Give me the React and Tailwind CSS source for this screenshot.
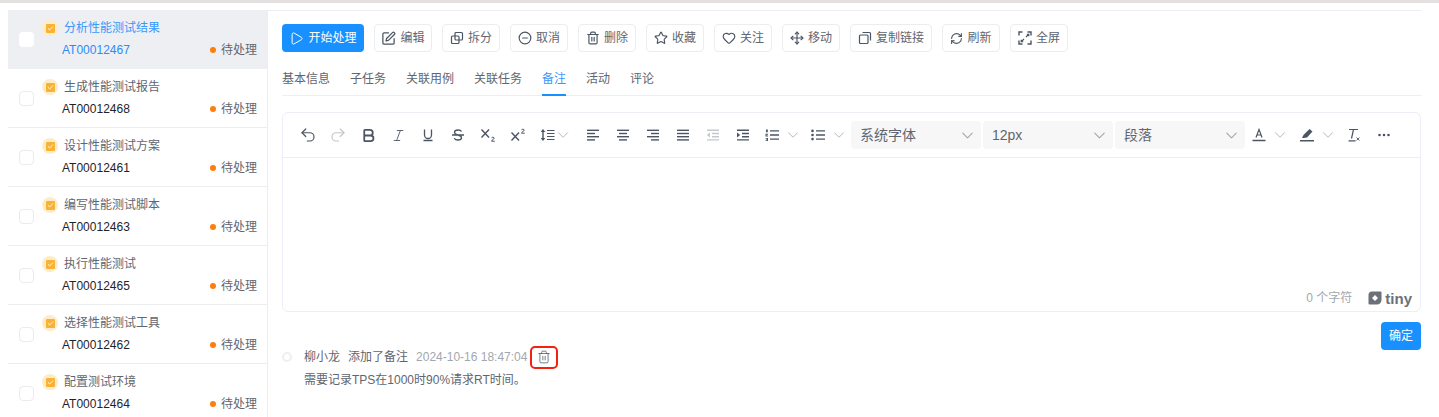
import { Play, SquarePen, CircleMinus, Trash2, Star, Heart, Move, RefreshCw, ChevronDown, Undo2, Redo2, Bold, Italic, Check } from 'lucide-react';

const font = "font-['Liberation_Sans','Noto_Sans_CJK_SC',sans-serif]";

const tasks = [
  { title: '分析性能测试结果', id: 'AT00012467', active: true },
  { title: '生成性能测试报告', id: 'AT00012468' },
  { title: '设计性能测试方案', id: 'AT00012461' },
  { title: '编写性能测试脚本', id: 'AT00012463' },
  { title: '执行性能测试', id: 'AT00012465' },
  { title: '选择性能测试工具', id: 'AT00012462' },
  { title: '配置测试环境', id: 'AT00012464' },
];

const tabs = ['基本信息', '子任务', '关联用例', '关联任务', '备注', '活动', '评论'];

function SplitIcon() {
  return (
    <svg width="14" height="14" viewBox="0 0 14 14" fill="none" stroke="currentColor" strokeWidth="1.2">
      <rect x="5" y="1.5" width="7.5" height="7.5" rx="1" />
      <rect x="1.5" y="5" width="7.5" height="7.5" rx="1" />
    </svg>
  );
}

function LinkCopyIcon() {
  return (
    <svg width="14" height="14" viewBox="0 0 14 14" fill="none" stroke="currentColor" strokeWidth="1.2">
      <rect x="1.5" y="4" width="8.5" height="8.5" rx="1" />
      <path d="M4.5 1.5h7a1 1 0 0 1 1 1v7" />
    </svg>
  );
}

function FullIcon() {
  return (
    <svg width="14" height="14" viewBox="0 0 14 14" fill="none" stroke="currentColor" strokeWidth="1.4">
      <path d="M4.500 1h-3.500v3.500M9.500 1h3.500v3.500M4.500 13h-3.500v-3.500M9.500 13h3.500v-3.500" />
      <path d="M8 6l2.500-2.500M8.800 3.300h2v2M6 8l-2.500 2.500M5.200 10.700h-2v-2" strokeWidth="1.100" />
    </svg>
  );
}

const actions = [
  { label: '编辑', icon: <SquarePen size={15} />, w: 'w-[58px]' },
  { label: '拆分', icon: <SplitIcon />, w: 'w-[58px]' },
  { label: '取消', icon: <CircleMinus size={14} />, w: 'w-[58px]' },
  { label: '删除', icon: <Trash2 size={14} />, w: 'w-[58px]' },
  { label: '收藏', icon: <Star size={14} />, w: 'w-[58px]' },
  { label: '关注', icon: <Heart size={14} />, w: 'w-[58px]' },
  { label: '移动', icon: <Move size={14} />, w: 'w-[58px]' },
  { label: '复制链接', icon: <LinkCopyIcon />, w: 'w-[82px]' },
  { label: '刷新', icon: <RefreshCw size={13} />, w: 'w-[58px]' },
  { label: '全屏', icon: <FullIcon />, w: 'w-[58px]' },
];

function Lines({ rows }) {
  return (
    <svg width="14" height="12" viewBox="0 0 14 12" className="text-[#4b5563]" fill="currentColor">
      {rows.map((r, i) => (
        <rect key={i} x={r[0]} y={i * 3.2 + 0.6} width={r[1]} height="1.4" />
      ))}
    </svg>
  );
}

function Slot({ children, w = 'w-[30px]' }) {
  return <div className={`flex items-center justify-center shrink-0 text-[#4b5563] ${w}`}>{children}</div>;
}

function Chev() {
  return <ChevronDown size={18} className="text-[#b4b8be] shrink-0" strokeWidth={1.3} />;
}

function SelectBox({ label }) {
  return (
    <div className="flex items-center justify-between w-[130px] h-[28px] shrink-0 rounded bg-[#f7f7f8] pl-[9px] pr-[4px] text-[14px] text-[#5f6670]">
      <span>{label}</span>
      <ChevronDown size={19} className="text-[#a0a4ab]" strokeWidth={1.3} />
    </div>
  );
}

function EditorToolbar() {
  return (
    <div className="flex items-center h-[45px] pl-[10px] border-b border-[#ecedf8]">
      <Slot><Undo2 size={18} strokeWidth={1.6} /></Slot>
      <Slot><Redo2 size={18} strokeWidth={1.6} className="text-[#c4c7cc]" /></Slot>
      <Slot><Bold size={17} strokeWidth={2.5} /></Slot>
      <Slot><Italic size={15} strokeWidth={1.4} /></Slot>
      <Slot>
        <svg width="14" height="14" viewBox="0 0 14 14" fill="none" stroke="currentColor" strokeWidth="1.3">
          <path d="M3.500 1.500v5.500a3.500 3.500 0 0 0 7 0V1.500M2.500 12.500h9" />
        </svg>
      </Slot>
      <Slot>
        <svg width="14" height="14" viewBox="0 0 14 14" fill="none" stroke="currentColor" strokeWidth="1.3">
          <path d="M10.500 3.500C10 2.500 8.800 2 7 2 5 2 3.500 2.800 3.500 4.300 3.500 6 5 6.500 7 7c2 .5 3.500 1 3.500 2.800C10.500 11.200 9 12 7 12c-1.800 0-3.200-.6-3.700-1.800M1 7h12" />
        </svg>
      </Slot>
      <Slot>
        <svg width="17" height="14" viewBox="0 0 17 14" fill="none" stroke="currentColor">
          <path d="M1.500 1.500l7.500 8M9 1.500l-7.500 8" strokeWidth="1.400" />
          <path d="M11.500 9.800c.5-.8 2.700-.8 2.700.4 0 1-2.700 1.700-2.700 3h3.200" strokeWidth="1" />
        </svg>
      </Slot>
      <Slot>
        <svg width="17" height="14" viewBox="0 0 17 14" fill="none" stroke="currentColor">
          <path d="M1.500 4.500l7.500 8M9 4.500l-7.500 8" strokeWidth="1.400" />
          <path d="M11.500 1.800c.5-.8 2.700-.8 2.700.4 0 1-2.700 1.700-2.700 3h3.200" strokeWidth="1" />
        </svg>
      </Slot>
      <Slot w="w-[45px] -space-x-[1px]">
        <svg width="15" height="14" viewBox="0 0 15 14" fill="none" stroke="currentColor">
          <path d="M3 2v10" strokeWidth="1.400" />
          <path d="M1 4l2-2.600L5 4M1 10l2 2.600L5 10" fill="currentColor" strokeWidth="0.6" />
          <path d="M7 2.500h7.500M7 5.500h7.500M7 8.500h7.500M7 11.500h7.500" strokeWidth="1.200" />
        </svg>
        <Chev />
      </Slot>
      <Slot><Lines rows={[[1, 12], [1, 8], [1, 12], [1, 8]]} /></Slot>
      <Slot><Lines rows={[[1, 12], [3, 8], [1, 12], [3, 8]]} /></Slot>
      <Slot><Lines rows={[[1, 12], [5, 8], [1, 12], [5, 8]]} /></Slot>
      <Slot><Lines rows={[[1, 12], [1, 12], [1, 12], [1, 12]]} /></Slot>
      <Slot>
        <svg width="14" height="12" viewBox="0 0 14 12" className="text-[#c4c7cc]" fill="currentColor">
          <path d="M1 .6h12V2H1zM6 3.800h7v1.400H6zM6 7h7v1.400H6zM1 10.200h12v1.400H1zM4 3.500v5L.8 6z" />
        </svg>
      </Slot>
      <Slot>
        <svg width="14" height="12" viewBox="0 0 14 12" fill="currentColor">
          <path d="M1 .6h12V2H1zM6 3.800h7v1.400H6zM6 7h7v1.400H6zM1 10.200h12v1.400H1zM1 3.500v5L4.200 6z" />
        </svg>
      </Slot>
      <div className="flex items-center shrink-0 w-[47px] pl-[7px] gap-[5px] text-[#4b5563]">
        <svg width="14" height="14" viewBox="0 0 14 14" fill="currentColor">
          <path d="M5 2.200h9v1.400H5zM5 6.300h9v1.400H5zM5 10.400h9v1.400H5z" />
          <path d="M1 1.500h1.800v2.800H1zM0.500 5.800h2.600v1H1.500v.6h1.600v1H.5zM.5 10h2.500v3H.5v-.7h1.500v-.5H1v-.6h1v-.5H.5z" />
        </svg>
        <Chev />
      </div>
      <div className="flex items-center shrink-0 w-[46px] pl-[6px] gap-[5px] text-[#4b5563]">
        <svg width="14" height="14" viewBox="0 0 14 14" fill="currentColor">
          <path d="M5 2.200h9v1.400H5zM5 6.300h9v1.400H5zM5 10.400h9v1.400H5z" />
          <circle cx="1.500" cy="2.900" r="1.300" />
          <circle cx="1.500" cy="7" r="1.300" />
          <circle cx="1.500" cy="11.100" r="1.300" />
        </svg>
        <Chev />
      </div>
      <div className="flex gap-[2px]">
        <SelectBox label="系统字体" />
        <SelectBox label="12px" />
        <SelectBox label="段落" />
      </div>
      <div className="flex items-center shrink-0 w-[48px] pl-[7px] gap-[5px] text-[#4b5563]">
        <svg width="14" height="14" viewBox="0 0 14 14" fill="none" stroke="currentColor">
          <path d="M4 9.500L7 1.500l3 8M5 7h4" strokeWidth="1.200" />
          <path d="M0.500 12.500h13" strokeWidth="1.500" />
        </svg>
        <Chev />
      </div>
      <div className="flex items-center shrink-0 w-[46px] pl-[7px] gap-[5px] text-[#4b5563]">
        <svg width="14" height="14" viewBox="0 0 14 14" fill="currentColor">
          <path d="M9.500 1l3 2.500-5.500 6-3.500.5-1.500 0 1.500-3z" />
          <path d="M0 12h14v1.500H0z" />
        </svg>
        <Chev />
      </div>
      <Slot>
        <svg width="14" height="14" viewBox="0 0 14 14" fill="none" stroke="currentColor" strokeWidth="1.200">
          <path d="M2 1.500h9M6.500 1.500l-2 9M1.500 12.800h7" />
          <path d="M9.500 9.500l3 3M12.500 9.500l-3 3" strokeWidth="0.900" />
        </svg>
      </Slot>
      <Slot>
        <svg width="14" height="4" viewBox="0 0 14 4" fill="currentColor">
          <circle cx="2.500" cy="2" r="1.300" />
          <circle cx="7" cy="2" r="1.300" />
          <circle cx="11.500" cy="2" r="1.300" />
        </svg>
      </Slot>
    </div>
  );
}

function TaskRow({ title, id, active }) {
  return (
    <div className={`flex h-[59px] shrink-0 pr-[10px] border-b ${active ? 'bg-[#eeeff3] border-[#eeeff3]' : 'border-[#ecedef]'}`}>
      <div className="flex items-center pl-[11px] w-[34px] shrink-0">
        <span className={`block w-[15px] h-[15px] rounded-[4px] bg-white ${active ? '' : 'border border-[#eaebee]'}`} />
      </div>
      <div className="flex flex-col flex-1">
        <div className="flex items-center gap-[6px] h-[36px]">
          <span className="flex items-center justify-center w-[16px] h-[16px] rounded-full bg-[#fdecc8]">
            <span className="flex items-center justify-center w-[9px] h-[9px] rounded-[1px] bg-[#f9b233]">
              <Check size={7} className="text-white" strokeWidth={3} />
            </span>
          </span>
          <span className={`text-xs ${active ? 'text-[#3b97fb]' : 'text-[#5f6670]'}`}>{title}</span>
        </div>
        <div className="flex items-center justify-between h-[8px]">
          <span className={`text-xs pl-[20px] ${active ? 'text-[#2a8dfa]' : 'text-[#1f2329]'}`}>{id}</span>
          <span className="flex items-center gap-[5px] text-xs text-[#5f6670]">
            <span className="w-[6px] h-[6px] rounded-full bg-[#ff7d0a]" />
            待处理
          </span>
        </div>
      </div>
    </div>
  );
}

export default function App() {
  return (
    <div className={`h-[417px] overflow-hidden bg-white ${font}`}>
      <div className="h-[3px] bg-[#e4e0e0]" />
      <div className="flex pl-[8px] pt-[7px]">
        <div className="w-[260px] h-[407px] overflow-hidden shrink-0 flex flex-col border-r border-[#ecedef]">
          {tasks.map(t => <TaskRow key={t.id} {...t} />)}
        </div>
        <div className="w-[1153px] pl-[14px]">
          <div className="-ml-[14px] border-t border-[#ecedf3]" />
          <div className="flex gap-[10px] mt-[13px]">
            <button className="flex items-center justify-center gap-[4px] w-[82px] h-[28px] rounded bg-[#1890ff] text-xs text-white">
              <Play size={15} strokeWidth={1.6} />
              开始处理
            </button>
            {actions.map(a => (
              <button key={a.label} className={`flex items-center justify-center gap-[4px] h-[28px] rounded border border-[#ecedf0] text-xs text-[#5f6670] ${a.w}`}>
                <span className="text-[#4b5563]">{a.icon}</span>
                {a.label}
              </button>
            ))}
          </div>
          <div className="flex gap-[20px] h-[44px] border-b border-[#ecedf8]">
            {tabs.map(t => (
              <div key={t} className={`flex items-center pt-[12px] text-xs border-b-2 h-[44px] ${t === '备注' ? 'text-[#3b97fb] border-[#1890ff]' : 'text-[#5f6670] border-transparent'}`}>
                {t}
              </div>
            ))}
          </div>
          <div className="h-[200px] mt-[16px] border border-[#ecedf8] rounded-md flex flex-col">
            <EditorToolbar />
            <div className="flex-1" />
            <div className="flex items-center justify-end h-[26px] pr-[8px]">
              <span className="text-xs text-[#a3a7ad] mr-[16px]">0 个字符</span>
              <span className="flex items-center gap-[3px] text-[#6b7178]">
                <svg width="14" height="14" viewBox="0 0 14 14" fill="currentColor">
                  <path fillRule="evenodd" d="M4 .5h8.500A1 1 0 0 1 13.500 1.500V9A4.500 4.500 0 0 1 9 13.500H1.500A1 1 0 0 1 .5 12.500V4A3.500 3.500 0 0 1 4 .5zM7 4L4 7l3 3 3-3z" />
                </svg>
                <span className="text-[15px] font-bold leading-none">tiny</span>
              </span>
            </div>
          </div>
          <div className="flex justify-end mt-[10px]">
            <button className="w-[40px] h-[28px] rounded bg-[#1890ff] text-xs text-white">确定</button>
          </div>
          <div className="flex items-start">
            <div className="w-[22px] shrink-0 pt-[2px]">
              <span className="block w-[10px] h-[10px] rounded-full border-2 border-[#eeeff1]" />
            </div>
            <div className="text-xs">
              <div className="flex items-center h-[22px] -mt-[4px]">
                <span className="text-[#5f6670]">柳小龙</span>
                <span className="ml-[8px] text-[#5f6670]">添加了备注</span>
                <span className="ml-[8px] text-[#a3a7ad]">2024-10-16 18:47:04</span>
                <span className="flex items-center justify-center ml-[3px] w-[28px] h-[23px] rounded-[5px] border-[2.5px] border-[#f5200f] text-[#4b5563]">
                  <Trash2 size={14} strokeWidth={1.3} />
                </span>
              </div>
              <div className="mt-[4px] text-[#5f6670]">需要记录TPS在1000时90%请求RT时间。</div>
            </div>
          </div>
        </div>
      </div>
    </div>
  );
}
